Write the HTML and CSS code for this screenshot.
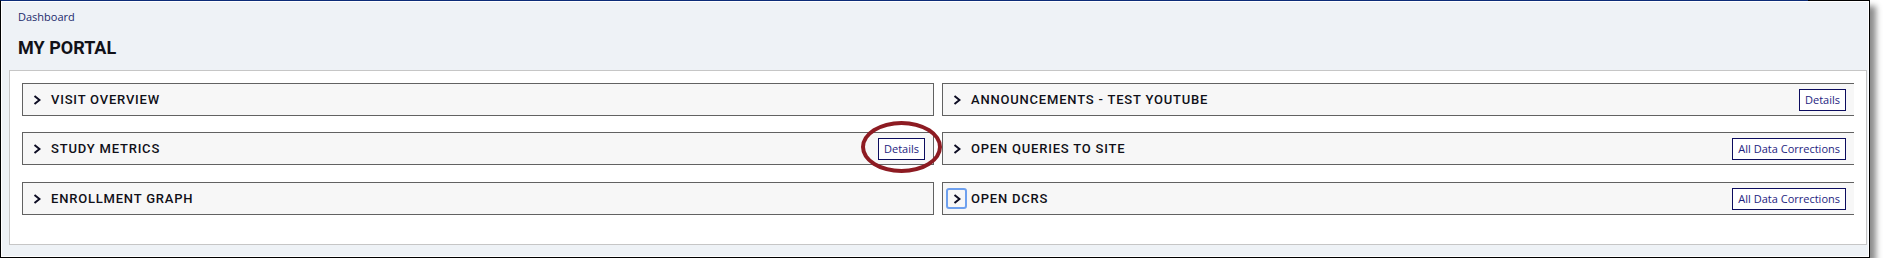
FILE: index.html
```html
<!DOCTYPE html>
<html lang="en">
<head>
    <meta charset="UTF-8">
    <title>My Portal</title>
    <link rel="stylesheet" href="styles.css">
</head>
<body>

    <div class="window">
        <header class="page-header">
            <div class="breadcrumb">Dashboard</div>
            <h1 class="page-title">MY PORTAL</h1>
        </header>

        <div class="portal">
            <!-- coluna esquerda / coluna direita, linha a linha -->
            <div class="panel">
                <button class="toggle"><svg width="8" height="10" viewBox="0 0 8 10"><path d="M1.5 1 L6.5 5 L1.5 9"/></svg></button>
                <span class="panel-title">VISIT OVERVIEW</span>
            </div>
            <div class="panel panel-right">
                <button class="toggle"><svg width="8" height="10" viewBox="0 0 8 10"><path d="M1.5 1 L6.5 5 L1.5 9"/></svg></button>
                <span class="panel-title">ANNOUNCEMENTS - TEST YOUTUBE</span>
                <button class="link-btn">Details</button>
            </div>

            <div class="panel">
                <button class="toggle"><svg width="8" height="10" viewBox="0 0 8 10"><path d="M1.5 1 L6.5 5 L1.5 9"/></svg></button>
                <span class="panel-title">STUDY METRICS</span>
                <span class="annotated">
                    <button class="link-btn">Details</button>
                    <span class="ring"></span>
                </span>
            </div>
            <div class="panel panel-right">
                <button class="toggle"><svg width="8" height="10" viewBox="0 0 8 10"><path d="M1.5 1 L6.5 5 L1.5 9"/></svg></button>
                <span class="panel-title">OPEN QUERIES TO SITE</span>
                <button class="link-btn">All Data Corrections</button>
            </div>

            <div class="panel panel-last">
                <button class="toggle"><svg width="8" height="10" viewBox="0 0 8 10"><path d="M1.5 1 L6.5 5 L1.5 9"/></svg></button>
                <span class="panel-title">ENROLLMENT GRAPH</span>
            </div>
            <div class="panel panel-right panel-last">
                <button class="toggle focused"><svg width="8" height="10" viewBox="0 0 8 10"><path d="M1.5 1 L6.5 5 L1.5 9"/></svg></button>
                <span class="panel-title">OPEN DCRS</span>
                <button class="link-btn">All Data Corrections</button>
            </div>
        </div>
    </div>

</body>
</html>
```

FILE: styles.css
```css
/* Reset */
* {
    margin: 0;
    padding: 0;
    box-sizing: border-box;
}

body {
    background-color: #ffffff;
    font-family: 'Open Sans', sans-serif;
    color: #111;
}

/* Janela */
.window {
    position: relative;
    width: 1870px;
    height: 258px;
    background-color: #eef2f6;
    border: 1px solid #000;
    border-top-color: #0c2c78;
    box-shadow: inset 0 0 0 1px #ffffff, 6px 6px 6px rgba(0, 0, 0, 0.45);
    padding: 1px;
}

.window::after {
    content: "";
    position: absolute;
    top: -1px;
    right: -1px;
    width: 62px;
    height: 1px;
    background-color: #000;
}

/* Cabeçalho */
.page-header {
    padding: 8px 16px 11px 16px;
}

.breadcrumb {
    font-size: 11px;
    line-height: 14px;
    color: #1c2a6c;
}

.page-title {
    margin-top: 13px;
    font-family: 'Roboto', sans-serif;
    font-size: 18px;
    line-height: 22px;
    font-weight: 700;
    color: #111118;
}

/* Painéis */
.portal {
    margin: 0 1px 0 7px;
    background-color: #ffffff;
    border: 1px solid #c6c6c6;
    padding: 12px 12px 29px 12px;
    display: grid;
    grid-template-columns: 1fr 1fr;
    column-gap: 8px;
    row-gap: 16px;
}

.panel {
    height: 33px;
    display: flex;
    align-items: center;
    background-color: #f7f7f7;
    border: 1px solid #626262;
    padding: 0 8px 0 3px;
}

.panel-last {
    margin-top: 1px;
}

.panel-right {
    border-right: none;
}

.toggle {
    width: 21px;
    height: 21px;
    display: flex;
    align-items: center;
    justify-content: center;
    background: transparent;
    border: 2px solid transparent;
    border-radius: 3px;
    margin-right: 4px;
}

.toggle.focused {
    border-color: #6ea0ee;
}

.toggle svg path {
    fill: none;
    stroke: #0b0b22;
    stroke-width: 2;
}

.panel-title {
    flex: 1;
    font-family: 'Roboto', sans-serif;
    font-size: 13px;
    font-weight: 500;
    letter-spacing: 0.8px;
    color: #101018;
}

.link-btn {
    height: 22px;
    padding: 0 5px;
    background-color: #ffffff;
    border: 1px solid #0c0c5e;
    font-family: 'Open Sans', sans-serif;
    font-size: 11px;
    color: #1d2380;
}

/* Anotação vermelha */
.annotated {
    position: relative;
    display: flex;
}

.ring {
    position: absolute;
    top: -17px;
    left: -17px;
    right: -17px;
    bottom: -13px;
    border: 4px solid #8d1b22;
    border-radius: 50%;
}
```
